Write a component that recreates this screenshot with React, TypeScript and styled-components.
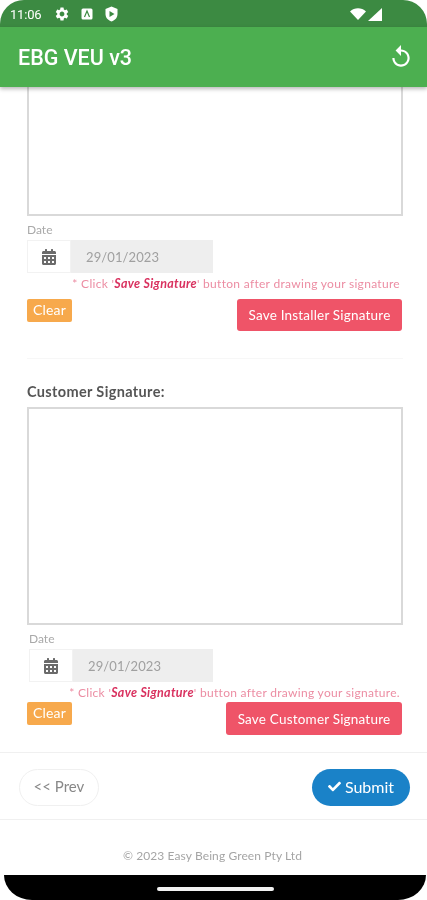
import React from "react";
import styled, { createGlobalStyle } from "styled-components";
import { FaCalendarAlt, FaCheck } from "react-icons/fa";
import { MdReplay, MdSettings } from "react-icons/md";

const Global = createGlobalStyle`
  html, body { margin: 0; padding: 0; background: #fff; }
  * { box-sizing: border-box; }
  body { font-family: Lato, "Open Sans", "Liberation Sans", sans-serif; }
`;

const Screen = styled.div`
  width: 427px; height: 900px; display: flex; flex-direction: column;
  overflow: hidden; background: #fff; filter: blur(0.6px);
`;
const StatusBar = styled.div`
  height: 27px; flex: none; background: #3c8a42; color: #fff; display: flex; align-items: center;
  padding: 1px 0 0 10px; border-radius: 24px 24px 0 0; font: 13px Roboto, sans-serif;
`;
const Time = styled.span` width: 44px; letter-spacing: -0.2px; `;
const StatusGap = styled.span` width: 11px; flex: none; `;
const StatusRight = styled.div` margin-left: auto; margin-right: 45px; display: flex; align-items: center; gap: 2px; `;
const AppBar = styled.header`
  height: 60px; flex: none; background: #4caf50; color: #fff; display: flex; align-items: center;
  justify-content: space-between; padding: 0 13px 0 18px; position: relative; z-index: 2;
  box-shadow: 0 2px 4px rgba(0,0,0,.28);
  font: 500 21.5px Roboto, sans-serif;
`;
const Content = styled.main` flex: 1; display: flex; flex-direction: column; min-height: 0; `;
const Section = styled.section`
  display: flex; flex-direction: column; padding: 0 24px 0 27px;
`;
const SigBox = styled.div<{ $h: number; $noTop?: boolean }>`
  height: ${p => p.$h}px; border: 2px solid #d9d9d9; ${p => p.$noTop ? "border-top: 0;" : ""} background: #fff;
`;
const DateLabel = styled.div<{ $indent: number }>`
  font-size: 12px; line-height: 14px; color: #a9a9a9; margin: 7px 0 3px ${p => p.$indent}px;
`;
const DateGroup = styled.div<{ $indent: number }>`
  display: flex; height: 33px; width: ${p => 186 - p.$indent}px; margin-left: ${p => p.$indent}px;
`;
const DateAddon = styled.div`
  width: 44px; flex: none; border: 1px solid #f2f2f2; display: flex; align-items: center; justify-content: center;
  color: #6b6b6b; font-size: 16px;
`;
const DateValue = styled.div`
  flex: 1; background: #eeeeee; color: #a0a0a0; font-size: 13px; letter-spacing: .1px; display: flex; align-items: center; padding-left: 15px;
`;
const Note = styled.div`
  font-size: 12px; line-height: 14px; color: #ec8da3; text-align: right; padding-right: 3px; margin-top: 4px;
  letter-spacing: .3px; white-space: nowrap; b { color: #d9315f; font-style: italic; font-weight: 700; font-size: 12.5px; }
`;
const Actions = styled.div<{ $top: number }>`
  display: flex; justify-content: space-between; align-items: flex-start; margin-top: ${p => p.$top}px; padding-right: 1px;
`;
const ClearBtn = styled.button`
  height: 23px; width: 45px; padding: 0 0 2px; border: 0; border-radius: 2px; background: #f7a94c; color: #fff;
  font: 14px Lato, sans-serif; letter-spacing: .2px;
`;
const SaveBtn = styled.button<{ $w: number; $h: number }>`
  width: ${p => p.$w}px; height: ${p => p.$h}px; padding: 0; border: 0; border-radius: 3px;
  background: #ef5468; color: #fff; font: 13.5px Lato, sans-serif; letter-spacing: .2px;
`;
const Divider = styled.hr<{ $top: number; $bottom: number; $light?: boolean }>`
  border: 0; height: 1px; background: ${p => p.$light ? "#f7f7f7" : "#f0f0f0"}; margin: ${p => p.$top}px 0 ${p => p.$bottom}px;
`;
const SigLabel = styled.div`
  font-size: 14.5px; line-height: 16px; font-weight: 700; color: #555; margin-bottom: 7px; letter-spacing: .35px;
`;
const NavRow = styled.div`
  display: flex; justify-content: space-between; align-items: flex-start; padding: 0 17px 0 19px;
`;
const PrevBtn = styled.button`
  width: 80px; height: 37px; border-radius: 19px; border: 1px solid #f0f0f0; background: #fff; color: #888;
  font: 15px Lato, sans-serif; padding: 0 0 3px;
`;
const SubmitBtn = styled.button`
  width: 98px; height: 37px; border-radius: 19px; border: 0; background: #1a82c8; color: #fff;
  font: 16px Lato, sans-serif; padding: 0 0 2px; display: flex; align-items: center; justify-content: center; gap: 4px;
`;
const Footer = styled.footer`
  flex: 1; display: flex; align-items: flex-start; justify-content: center; padding-top: 29px;
  font-size: 12px; line-height: 14px; color: #a5a5a5; letter-spacing: .1px; padding-right: 2px;
`;
const NavBar = styled.div`
  height: 25px; flex: none; margin: 0 1px 0 4px; background: #000; border-radius: 0 0 28px 28px / 0 0 25px 25px;
  display: flex; align-items: center; justify-content: center; padding-top: 2px;
`;
const Handle = styled.div` width: 117px; height: 4px; border-radius: 2px; background: #f2f2f2; `;

const Shield = () => (
  <svg width="15" height="16" viewBox="0 0 14 16"><path fill="#fff" d="M7 .5 13 3v5c0 3.6-2.5 6.4-6 7.5C3.500 14.400 1 11.600 1 8V3z" /><path fill="#3c8a42" d="M5 5l5 3-5 3z" /></svg>
);
const ABox = () => (
  <svg width="12" height="12" viewBox="0 0 12 12"><rect width="11" height="11" x=".5" y=".5" rx="1.500" fill="#fff" /><path fill="none" stroke="#3c8a42" strokeWidth="1.200" d="M3.500 9 6 3l2.500 6" /></svg>
);
const Wifi = () => (
  <svg width="16" height="12" viewBox="0 0 16 12"><path fill="#fff" d="M0 3.500C4.500-.8 11.500-.8 16 3.500L8 12z" /></svg>
);
const Signal = () => (
  <svg width="14" height="13" viewBox="0 0 14 13"><path fill="#fff" d="M14 0v13H0z" /></svg>
);

export default function App() {
  return (
    <Screen>
      <Global />
      <StatusBar>
        <Time>11:06</Time>
        <MdSettings size={16} />
        <StatusGap />
        <ABox />
        <StatusGap />
        <Shield />
        <StatusRight><Wifi /><Signal /></StatusRight>
      </StatusBar>
      <AppBar>
        <span>EBG VEU v3</span>
        <MdReplay size={26} />
      </AppBar>
      <Content>
        <Section>
          <SigBox $h={129} $noTop />
          <DateLabel $indent={0}>Date</DateLabel>
          <DateGroup $indent={0}>
            <DateAddon><FaCalendarAlt /></DateAddon>
            <DateValue>29/01/2023</DateValue>
          </DateGroup>
          <Note>* Click '<b>Save Signature</b>' button after drawing your signature</Note>
          <Actions $top={8}>
            <ClearBtn>Clear</ClearBtn>
            <SaveBtn $w={165} $h={32}>Save Installer Signature</SaveBtn>
          </Actions>
          <Divider $top={27} $bottom={25} $light />
          <SigLabel>Customer Signature:</SigLabel>
          <SigBox $h={218} />
          <DateLabel $indent={2}>Date</DateLabel>
          <DateGroup $indent={2}>
            <DateAddon><FaCalendarAlt /></DateAddon>
            <DateValue>29/01/2023</DateValue>
          </DateGroup>
          <Note>* Click '<b>Save Signature</b>' button after drawing your signature.</Note>
          <Actions $top={2}>
            <ClearBtn>Clear</ClearBtn>
            <SaveBtn $w={176} $h={33}>Save Customer Signature</SaveBtn>
          </Actions>
        </Section>
        <Divider $top={17} $bottom={16} />
        <NavRow>
          <PrevBtn>&lt;&lt; Prev</PrevBtn>
          <SubmitBtn><FaCheck size={13} />Submit</SubmitBtn>
        </NavRow>
        <Divider $top={13} $bottom={0} />
        <Footer>© 2023 Easy Being Green Pty Ltd</Footer>
      </Content>
      <NavBar><Handle /></NavBar>
    </Screen>
  );
}
